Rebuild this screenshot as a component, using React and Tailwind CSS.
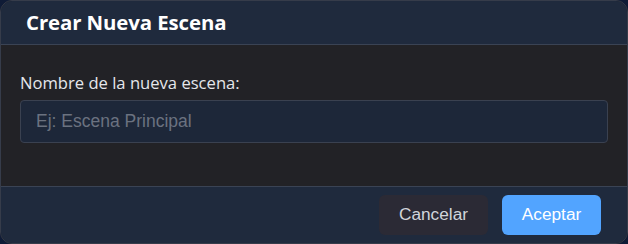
export default function App() {
  return (
    <div className="w-[628px] h-[244px] bg-[#0f1b36]">
      <div className="w-full h-full rounded-[12px] border border-[#363c4a] overflow-hidden flex flex-col bg-[#222226]">
        <div className="h-[44px] shrink-0 bg-[#1f2a3d] border-b border-[#3a4354] flex items-center px-[25px]">
          <h2 className="text-white font-bold text-[20.4px] tracking-[-0.1px]" style={{ fontFamily: '"Open Sans", sans-serif' }}>
            Crear Nueva Escena
          </h2>
        </div>
        <div className="flex-1 px-[19px] pt-[27px]">
          <label className="block text-[#e5e7eb] text-[16.6px] leading-[22px] mb-[6px]" style={{ fontFamily: '"Open Sans", sans-serif' }}>
            Nombre de la nueva escena:
          </label>
          <input
            placeholder="Ej: Escena Principal"
            className="w-full h-[43px] rounded-[4px] bg-[#1d2739] border border-[#3a4150] px-[15px] text-[17.5px] text-white placeholder:text-[#6b7280] outline-none"
            style={{ fontFamily: '"Liberation Sans", Arial, sans-serif' }}
          />
        </div>
        <div className="h-[57px] shrink-0 bg-[#1f2a3d] border-t border-[#3a4354] flex items-center justify-end gap-[14px] pr-[26px]">
          <button className="w-[109px] h-[40px] rounded-[6px] bg-[#2b2a35] text-[#d1d5db] text-[17.3px]" style={{ fontFamily: '"Liberation Sans", Arial, sans-serif' }}>
            Cancelar
          </button>
          <button className="w-[99px] h-[40px] rounded-[6px] bg-[#52a4ff] text-white text-[17.3px]" style={{ fontFamily: '"Liberation Sans", Arial, sans-serif' }}>
            Aceptar
          </button>
        </div>
      </div>
    </div>
  );
}
